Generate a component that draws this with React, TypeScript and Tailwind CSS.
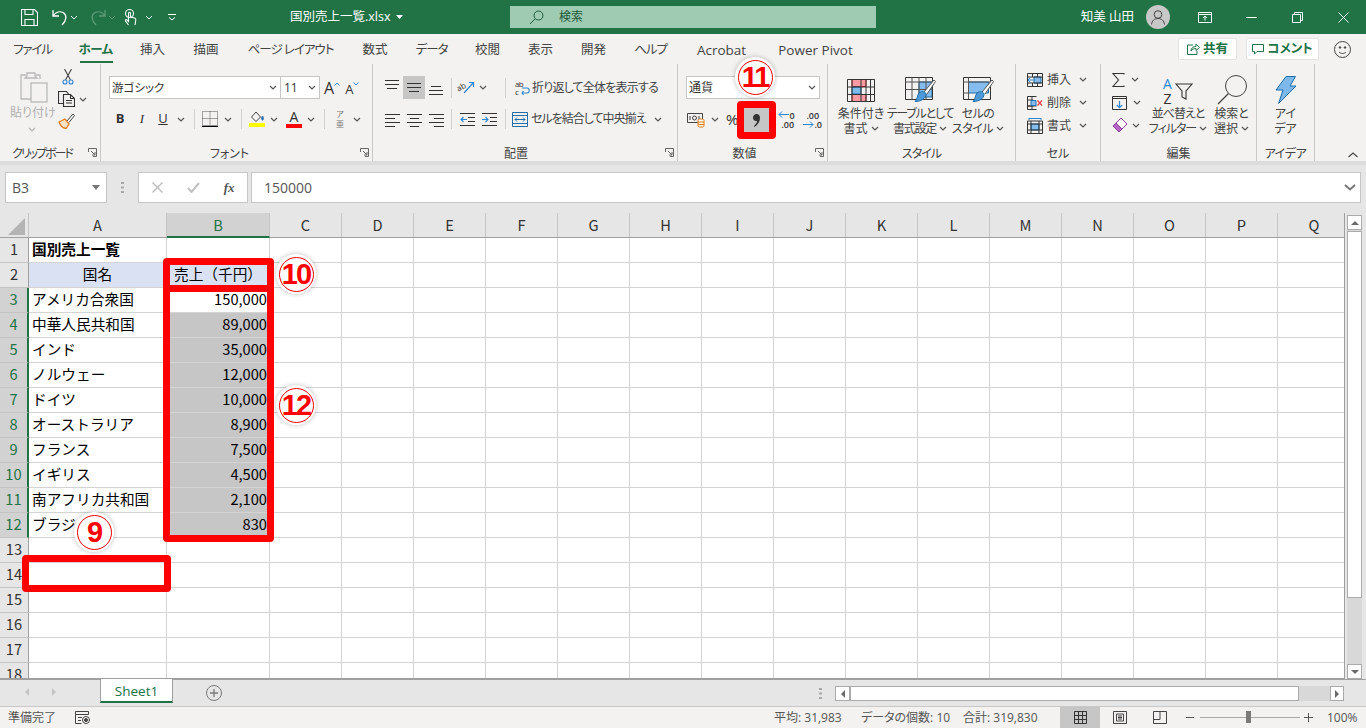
import React from 'react';

const ui = '[font-family:"Open_Sans","Noto_Sans_CJK_JP",sans-serif] [font-feature-settings:"palt"]';
const cellFont = '[font-family:"Noto_Sans_CJK_JP",sans-serif] [font-feature-settings:normal]';

// ── Small helpers ──────────────────────────────────────────────────────
const Chev = ({ className = '' }: { className?: string }) => (
  <svg width="8" height="5" viewBox="0 0 8 5" className={`shrink-0 ${className}`} fill="none" stroke="#555" strokeWidth="1.2">
    <path d="M1 1l3 3 3-3" />
  </svg>
);

const Launcher = () => (
  <svg width="9" height="9" viewBox="0 0 9 9" fill="none" stroke="#666" strokeWidth="1" className="absolute right-[3px] bottom-[4px]">
    <path d="M0.5 4V.5H8.5V8.5H5M3 3l4 4M7 4v3H4" />
  </svg>
);

const Sep = () => <div className="w-px h-[20px] bg-[#d0d0d0] shrink-0" />;

// ── Title bar icons ────────────────────────────────────────────────────
const SaveIcon = () => (
  <svg width="17" height="17" viewBox="0 0 17 17" fill="none" stroke="#fff" strokeWidth="1.1">
    <path d="M.5.5h13l3 3v13H.5zM4 .5v5h8v-5M4 16.5v-6h9v6" />
  </svg>
);
const UndoIcon = ({ color = '#fff', flip = false }: { color?: string; flip?: boolean }) => (
  <svg width="18" height="17" viewBox="0 0 16 17" fill="none" stroke={color} strokeWidth="1.3" className={flip ? '-scale-x-100' : ''}>
    <path d="M1 1v6h6M1.5 6.5C4 3 8 2 11 3.5c4 2.200 4 7.500-1 12.500" />
  </svg>
);
const TouchIcon = () => (
  <svg width="14" height="17" viewBox="0 0 14 17" fill="none" stroke="#fff" strokeWidth="1.1">
    <circle cx="5.500" cy="4.500" r="4" />
    <path d="M4.500 16l-3-4c-.5-1 .8-1.800 1.500-1l1.500 1.500V4.500c0-1.500 2-1.500 2 0V8l4 1c1 .3 1.500 1 1.300 2l-.8 5" />
  </svg>
);
const QatMore = () => (
  <svg width="8" height="8" viewBox="0 0 8 8" fill="none" stroke="#fff" strokeWidth="1">
    <path d="M0 1.500h8M1 4.500l3 2.500 3-2.500" />
  </svg>
);

// ── Ribbon icons ───────────────────────────────────────────────────────
const PasteIcon = () => (
  <svg width="28" height="32" viewBox="0 0 28 32" fill="none" stroke="#b9b9b9" strokeWidth="1.300">
    <path d="M6 4H1v24h10M16 4h4v4M7 5V2h8v3l2 2H5z" />
    <rect x="11" y="12" width="16" height="19" fill="#f3f2f1" />
  </svg>
);
const ScissorsIcon = () => (
  <svg width="12" height="16" viewBox="0 0 12 16" fill="none" strokeWidth="1.100">
    <path d="M2.500 0l6 11M9.500 0l-6 11" stroke="#444" />
    <circle cx="3" cy="13" r="2" stroke="#2e86d0" />
    <circle cx="9" cy="13" r="2" stroke="#2e86d0" />
  </svg>
);
const CopyIcon = () => (
  <svg width="17" height="16" viewBox="0 0 17 16" fill="none" stroke="#333" strokeWidth="1.100">
    <path d="M5 12.500H.5V.5h8l2 2.500M5.500 3.500h7l4 4v8h-11zM12.500 3.500v4h4M8 9.500h6M8 12h6" />
  </svg>
);
const BrushIcon = () => (
  <svg width="17" height="16" viewBox="0 0 17 16" fill="none">
    <path d="M1 9l6-3 4 5-3 4.500C5 15 2 12 1 9z" fill="#fbe3c8" stroke="#e07a16" strokeWidth="1.300" />
    <path d="M9 8l6-7 1.500 1.500-5.500 7" fill="#fff" stroke="#444" />
  </svg>
);
const GrowA = ({ up }: { up: boolean }) => (
  <span className="relative inline-flex items-end text-[#333] leading-none">
    <span className={up ? 'text-[16px]' : 'text-[13px]'}>A</span>
    <svg width="6" height="4" viewBox="0 0 6 4" fill="none" stroke="#2e86d0" className="mb-[10px]">
      <path d={up ? 'M.5 3.500L3 1l2.500 2.500' : 'M.5.5L3 3 5.500.5'} />
    </svg>
  </span>
);
const BorderIcon = () => (
  <svg width="16" height="16" viewBox="0 0 16 16" fill="none" stroke="#555" strokeWidth="1" strokeDasharray="1 1">
    <path d="M.5.5h15v14H.5zM8 .5v14M.5 7.500h15" />
    <path d="M0 15.500h16" stroke="#000" strokeWidth="1.200" strokeDasharray="none" />
  </svg>
);
const FillIcon = () => (
  <span className="flex flex-col items-center w-[16px]">
    <svg width="15" height="12" viewBox="0 0 15 12" fill="none" stroke="#444">
      <path d="M6 1L1.500 6 6 10.500 10.500 6z" />
      <path d="M12.500 5c1.500 2 1 4 0 4-.8 0-1.500-2 0-4z" fill="#2e6fb0" stroke="#2e6fb0" />
    </svg>
    <span className="w-[16px] h-[4px] bg-[#ffff00]" />
  </span>
);
const FontColorIcon = () => (
  <span className="flex flex-col items-center w-[16px] leading-none">
    <span className="text-[14px] text-[#333] h-[12px] leading-[12px]">A</span>
    <span className="w-[16px] h-[4px] bg-[#ff0000] mt-[1px]" />
  </span>
);
const Lines = ({ kind, active = false }: { kind: string; active?: boolean }) => {
  const paths: Record<string, string> = {
    top: 'M2 1.500h14M2 5.500h14M4 9.500h10',
    mid: 'M2 4.500h14M2 8.500h14M4 12.500h10',
    bottom: 'M4 7.500h10M2 11.500h14M2 15.500h14',
    left: 'M2 3.500h15M2 7.500h10M2 11.500h15M2 15.500h10',
    center: 'M2 3.500h15M5 7.500h9M2 11.500h15M5 15.500h9',
    right: 'M2 3.500h15M7 7.500h10M2 11.500h15M7 15.500h10',
  };
  return (
    <span className={`w-[22px] h-[23px] flex items-center justify-center ${active ? 'bg-[#c6c6c6]' : ''}`}>
      <svg width="18" height="17" viewBox="0 0 18 17" fill="none" stroke="#333" strokeWidth="1">
        <path d={paths[kind]} />
      </svg>
    </span>
  );
};
const OrientIcon = () => (
  <svg width="18" height="15" viewBox="0 0 18 15" fill="none" className="overflow-visible">
    <text x="0" y="10" fontSize="8" fill="#333" transform="rotate(-30 4 8)">ab</text>
    <path d="M7 13L16 3M12 2.500h4.500V7" stroke="#2e86d0" strokeWidth="1.200" />
  </svg>
);
const IndentIcon = ({ flip = false }: { flip?: boolean }) => (
  <svg width="15" height="13" viewBox="0 0 15 13" fill="none">
    <path d="M0 .5h15M8 4.500h7M8 8.500h7M0 12.500h15" stroke="#333" />
    <path d={flip ? 'M0 6.500h6M3.500 4l2.500 2.500L3.500 9' : 'M1 6.500h6M3.500 4L1 6.500 3.500 9'} stroke="#2e86d0" strokeWidth="1.100" />
  </svg>
);
const WrapIcon = () => (
  <svg width="16" height="16" viewBox="0 0 16 16" fill="none" className="overflow-visible">
    <text x="0" y="7" fontSize="8" fill="#333">ab</text>
    <text x="0" y="15" fontSize="8" fill="#333">c</text>
    <path d="M7 13h5c3 0 3-5 0-5H7M8.500 11L7 13l1.500 2" stroke="#2e86d0" strokeWidth="1.100" />
  </svg>
);
const MergeIcon = () => (
  <svg width="16" height="15" viewBox="0 0 16 15" fill="none">
    <path d="M.5.5h15v14H.5zM.5 3.500h15M.5 11.500h15" stroke="#1f6ea8" />
    <path d="M3 7.500h10M5 5.500l-2 2 2 2M11 5.500l2 2-2 2" stroke="#1f6ea8" />
  </svg>
);
const AccountingIcon = () => (
  <svg width="18" height="17" viewBox="0 0 18 17" fill="none">
    <path d="M.5 2.500h15v9H.5z" stroke="#444" />
    <circle cx="7.500" cy="7" r="2" stroke="#444" />
    <path d="M3 5v4M12 5v4" stroke="#444" />
    <rect x="11" y="8" width="6" height="8" rx="1.500" fill="#fff" stroke="#e07a16" />
    <path d="M11 11h6M11 13.500h6" stroke="#e07a16" />
  </svg>
);
const DecIcon = ({ more }: { more: boolean }) => (
  <span className="relative w-[16px] h-[17px] leading-none text-[9px] text-[#333] font-semibold block">
    {more ? (
      <>
        <svg width="11" height="7" viewBox="0 0 11 7" fill="none" stroke="#2e86d0" className="absolute left-0 top-[0px]">
          <path d="M11 3.500H1M4 .5l-3 3 3 3" />
        </svg>
        <span className="absolute left-[11px] top-[0px]">0</span>
        <span className="absolute left-[3px] top-[9px]">.00</span>
      </>
    ) : (
      <>
        <span className="absolute left-[3px] top-[0px]">.00</span>
        <svg width="11" height="7" viewBox="0 0 11 7" fill="none" stroke="#2e86d0" className="absolute left-0 top-[10px]">
          <path d="M0 3.500h10M7 .5l3 3-3 3" />
        </svg>
        <span className="absolute left-[11px] top-[9px]">.0</span>
      </>
    )}
  </span>
);
const CondIcon = () => (
  <svg width="28" height="23" viewBox="0 0 28 23" fill="none">
    <path d="M5 .5h14v7H5zM5 15.500h14v7H5z" fill="#fb9aa0" stroke="#d8242c" />
    <path d="M5 8h9v7H5z" fill="#7fbcea" stroke="#1f6ea8" />
    <path d="M.5.5h27v22H.5zM.5 8h27M.5 15.500h27M5 .5v22M14 .5v22M19 .5v22M23.500.5v22" stroke="#333" strokeWidth="1" />
  </svg>
);
const TableBrushIcon = ({ wide }: { wide: boolean }) => (
  <svg width="31" height="27" viewBox="0 0 31 27" fill="none">
    {wide ? (
      <path d="M5.500 5h20v11h-20z" fill="#85bcee" stroke="#1f6ea8" />
    ) : (
      <path d="M14 5h13v15H14z" fill="#85bcee" stroke="#1f6ea8" />
    )}
    <path d="M.5.5h27v22H.5z" stroke="#333" />
    <path d={wide ? 'M.5 5h27M5.500.5V22M.5 16h5' : 'M.5 5h27M.5 12.500h27M7 .5v22M14 .5v22M21 .5v22'} stroke="#555" />
    <path d="M19 15L29 3l1.500 1.500L22 17" fill="#fff" stroke="#555" />
    <path d="M14 16c3-2.500 7-1 7 1.500 0 4-5 7-11 7 2.500-2 2-6 4-8.500z" fill="#4e9ad8" stroke="#1f6ea8" />
  </svg>
);
const CellInsert = () => (
  <svg width="16" height="14" viewBox="0 0 16 14" fill="none">
    <path d="M7 4h7v6H7z" fill="#85bcee" stroke="#1f6ea8" />
    <path d="M.5.5h15v13H.5zM.5 4h15M.5 10h15M5.500.5V4M10.500.5V4M5.500 10v3.500M10.500 10v3.500" stroke="#333" />
    <path d="M1 7h6M3.500 4.500L1 7l2.500 2.500" stroke="#2e86d0" />
  </svg>
);
const CellDelete = () => (
  <svg width="16" height="14" viewBox="0 0 16 14" fill="none">
    <path d="M.5.5h9M.5 13.500h9M.5.5v13M.5 4h5v6h-5M.5 10h9M5 .5V4M5 10v3.500" stroke="#333" />
    <path d="M4 4.500h5v5H4z" fill="#85bcee" stroke="#1f6ea8" />
    <path d="M10.500 4.500l4.500 5M15 4.500l-4.500 5" stroke="#e8454c" strokeWidth="1.400" />
  </svg>
);
const CellFormat = () => (
  <svg width="16" height="16" viewBox="0 0 16 16" fill="none">
    <path d="M4 6h8v6H4z" fill="#85bcee" stroke="#1f6ea8" />
    <path d="M.5 3h15v12.500H.5zM.5 6h15M.5 12h15M4 3v12.500M12 3v12.500" stroke="#333" />
    <path d="M2 .5h12M2 0v2M14 0v2" stroke="#2e86d0" />
  </svg>
);
const SigmaIcon = () => (
  <svg width="13" height="14" viewBox="0 0 13 14" fill="none" stroke="#333" strokeWidth="1.100">
    <path d="M12 1.500V.5H1l5.500 6.500L1 13.500h11v-1" />
  </svg>
);
const DownFillIcon = () => (
  <svg width="15" height="14" viewBox="0 0 15 14" fill="none">
    <path d="M.5.5h14v13H.5zM.5 2.500h14" stroke="#333" />
    <path d="M7.500 5v6.500M4.800 9l2.700 2.700L10.200 9" stroke="#2e86d0" strokeWidth="1.200" />
  </svg>
);
const EraserIcon = () => (
  <svg width="16" height="15" viewBox="0 0 16 15" fill="none">
    <path d="M1 8l6 6 3-3-6-6z" fill="#b665c4" stroke="#8e3fa0" />
    <path d="M4 5l5-5 6 6-5 5z" fill="#fff" stroke="#8e3fa0" />
  </svg>
);
const SortIcon = () => (
  <svg width="30" height="29" viewBox="0 0 30 29" fill="none" className="overflow-visible">
    <text x="0" y="13" fontSize="14" fill="#2e86d0" fontFamily="Open Sans">A</text>
    <text x="0.500" y="28" fontSize="14" fill="#333" fontFamily="Open Sans">Z</text>
    <path d="M13 8h16l-6 7v8l-4-2v-6z" stroke="#333" strokeWidth="1.100" />
  </svg>
);
const SearchBig = () => (
  <svg width="30" height="30" viewBox="0 0 30 30" fill="none" stroke="#444">
    <circle cx="19" cy="11" r="10.500" />
    <path d="M11.500 18.500L1 29" strokeWidth="1.200" />
  </svg>
);
const BoltIcon = () => (
  <svg width="22" height="28" viewBox="0 0 22 28" fill="#7cb8ea" stroke="#1f6ea8">
    <path d="M11 .5h9.500L15 10h6L3.500 27.500 8 14H1z" />
  </svg>
);

// ── Ribbon pieces ──────────────────────────────────────────────────────
const Group = ({ w, label, labelCls = '', launcher, children }: { w: string; label: string; labelCls?: string; launcher?: boolean; children: React.ReactNode }) => (
  <div className={`${w} shrink-0 h-full relative flex flex-col border-r border-[#c8c8c8] my-0`}>
    <div className="h-[82px] flex">{children}</div>
    <div className={`text-center text-[12px] leading-[15px] text-[#444] ${labelCls}`}>{label}</div>
    {launcher && <Launcher />}
  </div>
);

const BigButton = ({ w, icon, l1, l2, caret = true, textCls = '' }: { w: string; icon: React.ReactNode; l1: string; l2: string; caret?: boolean; textCls?: string }) => (
  <div className={`${w} flex flex-col items-center pt-[11px] text-[12px] leading-[15px] text-[#444]`}>
    <div className="h-[30px] flex items-center justify-center">{icon}</div>
    <div className={`mt-[1px] whitespace-nowrap ${textCls}`}>{l1}</div>
    <div className={`flex items-center gap-[3px] whitespace-nowrap ${textCls}`}>
      {l2}
      {caret && <Chev />}
    </div>
  </div>
);

const CellRow = ({ icon, label }: { icon: React.ReactNode; label: string }) => (
  <div className="h-[23px] flex items-center text-[12px] text-[#444]">
    <span className="w-[19px] flex justify-start">{icon}</span>
    <span className="w-[26px] text-center">{label}</span>
    <Chev className="ml-[7px]" />
  </div>
);

// ── Ribbon ─────────────────────────────────────────────────────────────
const Ribbon = () => (
  <div className="h-[97px] flex text-[#333]">
    <Group w="w-[101px]" label="クリップボード" labelCls="pr-[16px] tracking-[-2px]" launcher>
      <div className="w-[62px] pl-[20px] pt-[7px] flex flex-col items-start text-[#b0b0b0]">
        <PasteIcon />
        <span className="-ml-[10px] w-[44px] text-center mt-[1px] text-[12px] leading-[17px] whitespace-nowrap">貼り付け</span>
        <Chev className="ml-[8px] mt-[6px] opacity-40" />
      </div>
      <div className="flex flex-col items-start pt-[5px] gap-[6px]">
        <span className="ml-[0px]"><ScissorsIcon /></span>
        <span className="flex items-center gap-[4px] -ml-[4px]"><CopyIcon /><Chev /></span>
        <span className="-ml-[4px]"><BrushIcon /></span>
      </div>
    </Group>

    <Group w="w-[272px]" label="フォント" labelCls="pr-[14px]" launcher>
      <div className="flex flex-col pl-[8px] pt-[12px]">
        <div className="flex items-center h-[23px]">
          <div className="w-[172px] h-[23px] bg-white border border-[#c6c6c6] flex items-center justify-between pl-[2px] pr-[3px] text-[11.500px]">
            <span>游ゴシック</span><Chev />
          </div>
          <div className="w-[40px] h-[23px] -ml-px bg-white border border-[#c6c6c6] flex items-center justify-between pl-[3px] pr-[3px] text-[12px]">
            <span>11</span><Chev />
          </div>
          <span className="ml-[4px]"><GrowA up /></span>
          <span className="ml-[5px]"><GrowA up={false} /></span>
        </div>
        <div className="flex items-center h-[22px] mt-[9px] pl-[4px]">
          <span className="w-[14px] text-[13px] font-bold text-center">B</span>
          <span className="w-[14px] ml-[8px] text-[13px] italic text-center [font-family:'Liberation_Serif',serif]">I</span>
          <span className="w-[14px] ml-[7px] text-[13px] underline text-center">U</span>
          <Chev className="ml-[7px]" />
          <span className="ml-[9px]"><Sep /></span>
          <span className="ml-[7px]"><BorderIcon /></span>
          <Chev className="ml-[6px]" />
          <span className="ml-[9px]"><Sep /></span>
          <span className="ml-[7px]"><FillIcon /></span>
          <Chev className="ml-[5px]" />
          <span className="ml-[8px]"><FontColorIcon /></span>
          <Chev className="ml-[5px]" />
          <span className="ml-[9px]"><Sep /></span>
          <span className="ml-[8px] w-[14px] leading-[10px] text-[8px] text-center text-[#777]">ア<br />亜</span>
          <Chev className="ml-[6px]" />
        </div>
      </div>
    </Group>

    <Group w="w-[305px]" label="配置" labelCls="pr-[18px]" launcher>
      <div className="flex flex-col pl-[8px] pt-[12px]">
        <div className="flex items-center h-[23px]">
          <Lines kind="top" />
          <Lines kind="mid" active />
          <Lines kind="bottom" />
          <span className="ml-[4px]"><Sep /></span>
          <span className="ml-[5px]"><OrientIcon /></span>
          <Chev className="ml-[4px]" />
          <span className="ml-[18px]"><Sep /></span>
          <span className="ml-[9px] flex items-center text-[12px] text-[#444] whitespace-nowrap tracking-[-0.8px]"><WrapIcon /><span className="ml-[1px]">折り返して全体を表示する</span></span>
        </div>
        <div className="flex items-center h-[22px] mt-[9px]">
          <Lines kind="left" />
          <Lines kind="center" />
          <Lines kind="right" />
          <span className="ml-[4px]"><Sep /></span>
          <span className="ml-[8px]"><IndentIcon /></span>
          <span className="ml-[7px]"><IndentIcon flip /></span>
          <span className="ml-[8px]"><Sep /></span>
          <span className="ml-[6px] flex items-center text-[12px] text-[#444] whitespace-nowrap tracking-[-1px]"><MergeIcon /><span className="ml-[3px]">セルを結合して中央揃え</span><Chev className="ml-[9px]" /></span>
        </div>
      </div>
    </Group>

    <Group w="w-[150px]" label="数値" labelCls="pr-[16px]" launcher>
      <div className="flex flex-col pl-[8px] pt-[12px]">
        <div className="w-[134px] h-[23px] bg-white border border-[#c6c6c6] flex items-center justify-between pl-[2px] pr-[3px] text-[12px]">
          <span>通貨</span><Chev />
        </div>
        <div className="flex items-center h-[22px] mt-[9px] pl-[1px]">
          <AccountingIcon />
          <Chev className="ml-[6px]" />
          <span className="ml-[7px] text-[15px] leading-none">%</span>
          <span className="w-[25px] ml-[4px] shrink-0" />
          <span className="ml-[11px] shrink-0"><DecIcon more /></span>
          <span className="ml-[9px] shrink-0"><DecIcon more={false} /></span>
        </div>
      </div>
    </Group>

    <Group w="w-[188px]" label="スタイル" labelCls="tracking-[-1px]">
      <div className="flex pl-[3px]">
        <BigButton w="w-[60px]" icon={<CondIcon />} l1="条件付き" l2="書式" />
        <BigButton w="w-[58px]" icon={<TableBrushIcon wide={false} />} l1="テーブルとして" l2="書式設定" textCls="tracking-[-1.2px]" />
        <BigButton w="w-[58px]" icon={<TableBrushIcon wide />} l1="セルの" l2="スタイル" textCls="tracking-[-0.5px]" />
      </div>
    </Group>

    <Group w="w-[85px]" label="セル">
      <div className="flex flex-col pl-[11px] pt-[4px]">
        <CellRow icon={<CellInsert />} label="挿入" />
        <CellRow icon={<CellDelete />} label="削除" />
        <CellRow icon={<CellFormat />} label="書式" />
      </div>
    </Group>

    <Group w="w-[156px]" label="編集">
      <div className="w-[47px] flex flex-col pl-[11px] pt-[4px]">
        <span className="h-[23px] flex items-center gap-[6px]"><SigmaIcon /><Chev /></span>
        <span className="h-[23px] flex items-center gap-[6px]"><DownFillIcon /><Chev /></span>
        <span className="h-[23px] flex items-center gap-[4px]"><EraserIcon /><Chev /></span>
      </div>
      <BigButton w="w-[60px]" icon={<SortIcon />} l1="並べ替えと" l2="フィルター" textCls="tracking-[-1px]" />
      <BigButton w="w-[47px]" icon={<SearchBig />} l1="検索と" l2="選択" />
    </Group>

    <Group w="w-[58px]" label="アイデア" labelCls="tracking-[-0.5px]">
      <BigButton w="w-full" icon={<BoltIcon />} l1="アイ" l2="デア" caret={false} />
    </Group>

    <div className="flex-1 relative">
      <svg width="10" height="6" viewBox="0 0 10 6" fill="none" stroke="#444" strokeWidth="1.100" className="absolute right-[8px] bottom-[3px]">
        <path d="M.5 5L5 1l4.500 4" />
      </svg>
    </div>
  </div>
);

// ── Tabs ───────────────────────────────────────────────────────────────
const tabs = [
  { label: 'ファイル', w: 'w-[65px]', cls: 'tracking-[-1.2px]' },
  { label: 'ホーム', w: 'w-[61px]', active: true, cls: 'font-bold text-[#217346] tracking-[-0.5px]' },
  { label: '挿入', w: 'w-[53px]' },
  { label: '描画', w: 'w-[54px]' },
  { label: 'ページ レイアウト', w: 'w-[115px]', cls: 'tracking-[-1px]' },
  { label: '数式', w: 'w-[54px]' },
  { label: 'データ', w: 'w-[59px]', cls: 'tracking-[-1px]' },
  { label: '校閲', w: 'w-[53px]' },
  { label: '表示', w: 'w-[53px]' },
  { label: '開発', w: 'w-[53px]' },
  { label: 'ヘルプ', w: 'w-[61px]', cls: 'tracking-[-1px]' },
  { label: 'Acrobat', w: 'w-[81px]', cls: 'text-[13.500px]' },
  { label: 'Power Pivot', w: 'w-[107px]', cls: 'text-[13.500px]' },
];

// ── Sheet data ─────────────────────────────────────────────────────────
const rows: { a?: string; b?: string; kind?: string }[] = [
  { a: '国別売上一覧', kind: 'title' },
  { a: '国名', b: '売上（千円）', kind: 'head' },
  { a: 'アメリカ合衆国', b: '150,000', kind: 'active' },
  { a: '中華人民共和国', b: '89,000', kind: 'sel' },
  { a: 'インド', b: '35,000', kind: 'sel' },
  { a: 'ノルウェー', b: '12,000', kind: 'sel' },
  { a: 'ドイツ', b: '10,000', kind: 'sel' },
  { a: 'オーストラリア', b: '8,900', kind: 'sel' },
  { a: 'フランス', b: '7,500', kind: 'sel' },
  { a: 'イギリス', b: '4,500', kind: 'sel' },
  { a: '南アフリカ共和国', b: '2,100', kind: 'sel' },
  { a: 'ブラジル', b: '830', kind: 'sel' },
  {}, {}, {}, {}, {}, {},
];
const otherCols = ['C', 'D', 'E', 'F', 'G', 'H', 'I', 'J', 'K', 'L', 'M', 'N', 'O', 'P', 'Q'];

const Sheet = () => (
  <div className={`flex-1 min-w-0 overflow-hidden border-r border-b border-[#a0a0a0] bg-white ${cellFont}`}>
    <div className="flex h-[25px] bg-[#e6e6e6] text-[14.670px] text-[#333] border-b border-[#a0a0a0]">
      <div className="w-[29px] shrink-0 border-r border-[#c4c4c4] relative">
        <svg width="17" height="17" viewBox="0 0 17 17" className="absolute right-[3px] bottom-[2px]" fill="#b4b4b4"><path d="M17 0v17H0z" /></svg>
      </div>
      <div className="w-[138px] shrink-0 border-r border-[#c4c4c4] text-center leading-[23px]">A</div>
      <div className="w-[103px] shrink-0 bg-[#d2d2d2] text-[#217346] border-r border-[#c4c4c4] border-b-2 border-b-[#217346] h-[25px] text-center leading-[23px]">B</div>
      {otherCols.map(c => (
        <div key={c} className="w-[72px] shrink-0 border-r border-[#c4c4c4] text-center leading-[23px] last:border-r-0">{c}</div>
      ))}
    </div>
    {rows.map((r, i) => {
      const selected = r.kind === 'sel' || r.kind === 'active';
      return (
        <div key={i} className="flex h-[25px] text-[14.670px] leading-[22px] text-black">
          <div className={`w-[29px] shrink-0 text-center border-b border-b-[#c4c4c4] ${selected ? 'bg-[#d2d2d2] text-[#217346] border-r-2 border-r-[#217346]' : 'bg-[#e6e6e6] text-[#333] border-r border-r-[#a0a0a0]'}`}>{i + 1}</div>
          <div className={`w-[138px] shrink-0 border-r border-b border-[#d4d4d4] px-[3px] whitespace-nowrap overflow-hidden ${r.kind === 'head' ? 'bg-[#d9e1f2] text-center' : ''} ${r.kind === 'title' ? 'font-bold' : ''}`}>{r.a}</div>
          <div className={`w-[103px] shrink-0 border-r border-b border-[#d4d4d4] pr-[2px] whitespace-nowrap overflow-hidden ${r.kind === 'head' ? 'bg-[#d9e1f2] pl-[7px]' : 'text-right'} ${r.kind === 'sel' ? 'bg-[#c6c6c6]' : ''}`}>{r.b}</div>
          {otherCols.map(c => (
            <div key={c} className="w-[72px] shrink-0 border-r border-b border-[#d4d4d4]" />
          ))}
        </div>
      );
    })}
  </div>
);

// ── Overlays ───────────────────────────────────────────────────────────
const Badge = ({ n, pos }: { n: string; pos: string }) => (
  <div className={`absolute ${pos} w-[40px] h-[40px] rounded-full bg-white shadow-[0_0_5px_rgba(0,0,0,0.25)] flex items-center justify-center`}>
    <div className="w-[35px] h-[35px] rounded-full border border-[#f00000] flex items-center justify-center text-[#ff0000] font-bold text-[29px] leading-none tracking-[-2px] [font-family:'Liberation_Sans',sans-serif]">
      {n}
    </div>
  </div>
);

const ArrowBtn = ({ dir, cls }: { dir: string; cls: string }) => (
  <div className={`${cls} bg-white border border-[#ababab] flex items-center justify-center shrink-0`}>
    <svg width="8" height="8" viewBox="0 0 8 8" fill="#6a6a6a">
      <path d={dir === 'up' ? 'M0 6l4-4 4 4z' : dir === 'down' ? 'M0 2l4 4 4-4z' : dir === 'left' ? 'M6 0L2 4l4 4z' : 'M2 0l4 4-4 4z'} />
    </svg>
  </div>
);

export default function App() {
  return (
    <div className={`relative w-[1366px] h-[728px] overflow-hidden flex flex-col bg-[#f3f2f1] ${ui}`}>
      {/* Title bar */}
      <header className="h-[34px] bg-[#217346] flex items-center text-white shrink-0">
        <div className="w-[290px] flex items-center pl-[21px] shrink-0">
          <SaveIcon />
          <span className="ml-[13px]"><UndoIcon /></span>
          <svg width="8" height="5" viewBox="0 0 8 5" fill="none" stroke="#fff" className="ml-[1px]"><path d="M1 1l3 3 3-3" /></svg>
          <span className="ml-[11px]"><UndoIcon color="#5c9a77" flip /></span>
          <svg width="8" height="5" viewBox="0 0 8 5" fill="none" stroke="#5c9a77" className="ml-[1px]"><path d="M1 1l3 3 3-3" /></svg>
          <span className="ml-[8px]"><TouchIcon /></span>
          <svg width="8" height="5" viewBox="0 0 8 5" fill="none" stroke="#fff" className="ml-[7px]"><path d="M1 1l3 3 3-3" /></svg>
          <span className="ml-[15px]"><QatMore /></span>
        </div>
        <div className="w-[220px] shrink-0 flex items-center text-[12.500px]">
          国別売上一覧.xlsx
          <svg width="7" height="4" viewBox="0 0 7 4" fill="#fff" className="ml-[6px]"><path d="M0 0h7L3.500 4z" /></svg>
        </div>
        <div className="w-[366px] h-[22px] bg-[#a0cbb3] shrink-0 flex items-center pl-[19px] text-[12px] text-[#1c5a38]">
          <svg width="15" height="15" viewBox="0 0 15 15" fill="none" stroke="#1c5a38"><circle cx="9.500" cy="5.500" r="4.500" /><path d="M6 9l-5 5" /></svg>
          <span className="ml-[15px]">検索</span>
        </div>
        <div className="flex-1 flex items-center justify-end">
          <span className="text-[12.500px] whitespace-nowrap">知美 山田</span>
          <span className="ml-[12px] w-[24px] h-[24px] rounded-full bg-[#c8c8c8] flex items-center justify-center">
            <svg width="14" height="15" viewBox="0 0 14 15" fill="none" stroke="#444"><circle cx="7" cy="4.500" r="3.800" /><path d="M.5 14.500c.5-4 3-6 6.500-6s6 2 6.500 6" /></svg>
          </span>
          <span className="w-[46px] ml-[12px] flex justify-center -mr-[0px]">
            <svg width="14" height="11" viewBox="0 0 14 11" fill="none" stroke="#fff"><path d="M.5.5h13v10H.5zM.5 2.500h13M7 8.500V4.500M5 6l2-2 2 2" /></svg>
          </span>
          <span className="w-[46px] flex justify-center">
            <svg width="11" height="1" viewBox="0 0 11 1" stroke="#fff"><path d="M0 .5h11" /></svg>
          </span>
          <span className="w-[46px] flex justify-center">
            <svg width="11" height="11" viewBox="0 0 11 11" fill="none" stroke="#fff"><path d="M.5 2.500h8v8h-8zM2.500 2.500v-2h8v8h-2" /></svg>
          </span>
          <span className="w-[46px] flex justify-center">
            <svg width="11" height="11" viewBox="0 0 11 11" fill="none" stroke="#fff"><path d="M.5.5l10 10M10.500.5l-10 10" /></svg>
          </span>
        </div>
      </header>

      {/* Tabs */}
      <nav className="h-[30px] flex items-center text-[12.500px] text-[#444] shrink-0">
        {tabs.map(t => (
          <div key={t.label} className={`${t.w} shrink-0 h-full flex items-center justify-center relative pt-[3px] ${t.cls ?? ''}`}>
            {t.label}
            {t.active && <span className="absolute left-[15px] w-[33px] bottom-[1px] h-[2px] bg-[#217346]" />}
          </div>
        ))}
        <div className="ml-auto flex items-center">
          <div className="w-[59px] h-[22px] bg-white border border-[#e3e3e3] rounded-[2px] flex items-center justify-center gap-[3px] text-[12.500px] font-bold text-[#217346]">
            <svg width="13" height="12" viewBox="0 0 13 12" fill="none" stroke="#217346"><path d="M6 2H.5v9.500h9.500V8M4 8c0-3 2-4.500 5-4.500V1l3.500 3.500L9 7.500V5.500C7 5.500 5 6 4 8z" /></svg>
            共有
          </div>
          <div className="ml-[9px] w-[73px] h-[22px] bg-white border border-[#e3e3e3] rounded-[2px] flex items-center justify-center gap-[3px] text-[12.500px] font-bold text-[#217346]">
            <svg width="12" height="11" viewBox="0 0 12 11" fill="none" stroke="#217346"><path d="M.5.5h11v7H5L2.500 10V7.500h-2z" /></svg>
            コメント
          </div>
          <div className="w-[47px] flex justify-center">
            <svg width="17" height="17" viewBox="0 0 17 17" fill="none" stroke="#444"><circle cx="8.500" cy="8.500" r="8" /><circle cx="6" cy="6.500" r=".8" fill="#444" /><circle cx="11" cy="6.500" r=".8" fill="#444" /><path d="M5 11c2 2 5 2 7 0" /></svg>
          </div>
        </div>
      </nav>

      <Ribbon />
      <div className="h-[4px] bg-[#dcdcdc] shrink-0" />

      {/* Workbook area */}
      <div className="flex-1 min-h-0 bg-[#e6e6e6] flex flex-col">
        {/* Formula bar */}
        <div className="h-[48px] shrink-0 flex items-start pt-[7px] pl-[5px] pr-[5px]">
          <div className="w-[102px] h-[31px] bg-white border border-[#c6c6c6] flex items-center justify-between pl-[6px] pr-[6px] pb-[1px] text-[14px] text-[#555]">
            B3
            <svg width="8" height="5" viewBox="0 0 8 5" fill="#777"><path d="M0 0h8L4 5z" /></svg>
          </div>
          <div className="w-[31px] h-[31px] flex items-center justify-center">
            <svg width="3" height="11" viewBox="0 0 3 11" fill="#a8a8a8"><path d="M0 0h3v2H0zM0 4.500h3v2H0zM0 9h3v2H0z" /></svg>
          </div>
          <div className="w-[110px] h-[31px] bg-white border border-[#c6c6c6] flex items-center">
            <span className="w-[37px] flex justify-center">
              <svg width="11" height="11" viewBox="0 0 11 11" fill="none" stroke="#c0c0c0" strokeWidth="1.500"><path d="M.5.5l10 10M10.500.5l-10 10" /></svg>
            </span>
            <span className="w-[36px] flex justify-center">
              <svg width="13" height="11" viewBox="0 0 13 11" fill="none" stroke="#c0c0c0" strokeWidth="2"><path d="M1 6l3.500 4L12 1" /></svg>
            </span>
            <span className="w-[36px] text-center text-[13px] italic font-bold text-[#555] [font-family:'Liberation_Serif',serif]">fx</span>
          </div>
          <div className="ml-[3px] flex-1 h-[31px] bg-white border border-[#c6c6c6] flex items-center justify-between pl-[12px] pr-[4px] pb-[1px] text-[14px] text-[#555]">
            150000
            <svg width="12" height="7" viewBox="0 0 12 7" fill="none" stroke="#777" strokeWidth="2"><path d="M1 1l5 4.500L11 1" /></svg>
          </div>
        </div>

        {/* Grid + vertical scrollbar */}
        <div className="h-[466px] shrink-0 flex">
          <Sheet />
          <div className="w-[21px] shrink-0 flex flex-col pl-[2px] pr-[4px] pt-[2px]">
            <ArrowBtn dir="up" cls="w-[15px] h-[15px]" />
            <div className="flex-1 bg-[#d8d8d8] flex flex-col pt-[1px]">
              <div className="h-[367px] bg-white border border-[#ababab]" />
            </div>
            <ArrowBtn dir="down" cls="w-[15px] h-[15px]" />
          </div>
        </div>

        {/* Sheet tabs + horizontal scrollbar */}
        <div className="flex-1 flex items-start relative">
          <div className="w-[100px] h-[24px] shrink-0 flex items-center pl-[24px] gap-[21px] border-t border-[#a0a0a0]">
            <svg width="6" height="8" viewBox="0 0 6 8" fill="#c4c4c4"><path d="M5 0L1 4l4 4z" /></svg>
            <svg width="6" height="8" viewBox="0 0 6 8" fill="#c4c4c4"><path d="M1 0l4 4-4 4z" /></svg>
          </div>
          <div className="w-[73px] h-[24px] shrink-0 bg-white border-l border-r border-[#a0a0a0] border-b-2 border-b-[#217346] text-center text-[13.500px] leading-[25px] text-[#217346]">Sheet1</div>
          <div className="flex-1 h-full border-t border-[#a0a0a0] flex items-start -mr-[0px]">
            <span className="ml-[33px] mt-[5px] w-[16px] h-[16px] rounded-full border border-[#7a7a7a] flex items-center justify-center">
              <svg width="8" height="8" viewBox="0 0 8 8" stroke="#7a7a7a" strokeWidth="1.300"><path d="M4 0v8M0 4h8" /></svg>
            </span>
            <span className="ml-[597px] mt-[8px]">
              <svg width="3" height="11" viewBox="0 0 3 11" fill="#a8a8a8"><path d="M0 0h3v2H0zM0 4.500h3v2H0zM0 9h3v2H0z" /></svg>
            </span>
            <div className="ml-[13px] mt-[6px] w-[509px] h-[15px] flex bg-[#d8d8d8]">
              <ArrowBtn dir="left" cls="w-[15px] h-[15px]" />
              <div className="w-[449px] h-[15px] bg-white border border-[#ababab]" />
              <div className="flex-1" />
              <ArrowBtn dir="right" cls="w-[14px] h-[15px]" />
            </div>
          </div>
        </div>

        {/* Status bar */}
        <footer className="h-[22px] shrink-0 bg-[#f3f2f1] border-t border-[#c8c8c8] flex items-center text-[12px] text-[#555]">
          <span className="ml-[8px] w-[49px] whitespace-nowrap">準備完了</span>
          <svg width="15" height="13" viewBox="0 0 15 13" fill="none" stroke="#444" className="ml-[18px]"><path d="M.5.5h13v3H.5zM.5 3.500v9h6M3 6.500h4M3 9.500h3" /><circle cx="11" cy="9" r="3.500" /><circle cx="11" cy="9" r="1.500" fill="#444" /></svg>
          <div className="w-[684px] shrink-0" />
          <span className="w-[87px] shrink-0 whitespace-nowrap">平均: 31,983</span>
          <span className="w-[102px] shrink-0 whitespace-nowrap">データの個数: 10</span>
          <span className="w-[97px] shrink-0 whitespace-nowrap">合計: 319,830</span>
          <span className="w-[40px] h-full bg-[#c6c6c6] flex items-center justify-center shrink-0">
            <svg width="13" height="13" viewBox="0 0 13 13" fill="none" stroke="#333"><path d="M.5.5h12v12H.5zM4.500.5v12M8.500.5v12M.5 4.500h12M.5 8.500h12" /></svg>
          </span>
          <span className="w-[40px] flex justify-center shrink-0">
            <svg width="14" height="13" viewBox="0 0 14 13" fill="none" stroke="#444"><path d="M.5.5h13v12H.5zM3.500 3h7v7h-7zM5 5h4M5 6.500h4M5 8h4" /></svg>
          </span>
          <span className="w-[40px] flex justify-center shrink-0">
            <svg width="14" height="13" viewBox="0 0 14 13" fill="none" stroke="#444"><path d="M.5.5h13v12H.5zM7 .5v8H.5" /></svg>
          </span>
          <span className="ml-[6px] w-[8px] h-px bg-[#555] shrink-0" />
          <span className="ml-[6px] w-[100px] h-px bg-[#a8a8a8] relative shrink-0">
            <span className="absolute left-[46px] -top-[6px] w-[5px] h-[12px] bg-[#7a7a7a]" />
          </span>
          <svg width="9" height="9" viewBox="0 0 9 9" stroke="#555" className="ml-[4px] shrink-0"><path d="M4.500 0v9M0 4.500h9" /></svg>
          <span className="ml-[14px] whitespace-nowrap">100%</span>
        </footer>
      </div>

      {/* Annotations */}
      <div className="absolute left-[737px] top-[101px] w-[39px] h-[38px] rounded-[4px] border-[7px] border-[#ff0000] bg-[#c6c6c6] flex items-center justify-center">
        <svg width="7" height="13" viewBox="0 0 7 13" fill="#333"><path d="M3.500 0C6 0 7 2 7 4c0 4-2.500 7-5.500 9L1 12c2-2 3-3.500 3-5-2.500.5-4-1-4-3.500C0 2 1.500 0 3.500 0z" /></svg>
      </div>
      <div className="absolute left-[163px] top-[258px] w-[111px] h-[34px] rounded-[4px] border-[7px] border-[#ff0000]" />
      <div className="absolute left-[163px] top-[285px] w-[111px] h-[257px] rounded-[4px] border-[7px] border-[#ff0000]" />
      <div className="absolute left-[22px] top-[555px] w-[149px] h-[37px] rounded-[4px] border-[7px] border-[#ff0000]" />
      <Badge n="11" pos="left-[735px] top-[57px]" />
      <Badge n="10" pos="left-[276px] top-[254px]" />
      <Badge n="12" pos="left-[276px] top-[385px]" />
      <Badge n="9" pos="left-[74px] top-[512px]" />
    </div>
  );
}
